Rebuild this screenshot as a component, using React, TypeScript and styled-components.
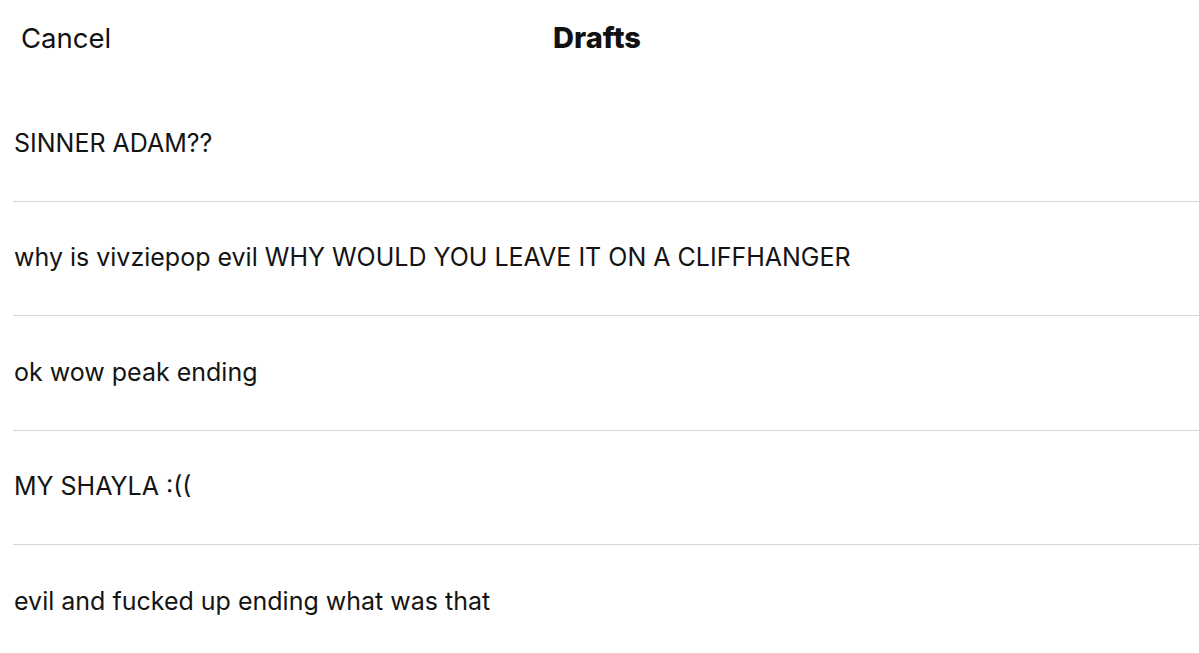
import React from "react";
import styled, { createGlobalStyle } from "styled-components";

const GlobalStyle = createGlobalStyle`
  html, body {
    margin: 0;
    padding: 0;
    background: #ffffff;
  }
  body {
    font-family: Inter, "Noto Sans", "Liberation Sans", sans-serif;
    color: #111111;
  }
`;

const Screen = styled.div`
  width: 1199px;
  height: 653px;
  overflow: hidden;
  background: #fff;
`;

const Header = styled.div`
  position: relative;
  height: 87px;
  display: flex;
  align-items: flex-start;
  justify-content: center;
  padding-top: 20px;
  box-sizing: border-box;
`;

const CancelButton = styled.button`
  position: absolute;
  left: 21px;
  top: 20px;
  border: 0;
  background: none;
  padding: 0;
  font-family: inherit;
  font-size: 27.5px;
  line-height: 36px;
  color: #111;
  cursor: pointer;
`;

const Title = styled.h1`
  margin: 0 0 0 -5px;
  font-size: 29px;
  line-height: 36px;
  font-weight: 800;
  color: #111;
`;

const List = styled.div`
  display: flex;
  flex-direction: column;
  padding-left: 13px;
`;

const Row = styled.div<{ $last?: boolean }>`
  height: 114.5px;
  display: flex;
  align-items: center;
  box-sizing: border-box;
  border-bottom: ${(p) => (p.$last ? "none" : "1.5px solid #d6d6d6")};
  padding-left: 1px;
  padding-bottom: 2px;
  font-size: 25px;
  color: #141414;
`;

const drafts = [
  "SINNER ADAM??",
  "why is vivziepop evil WHY WOULD YOU LEAVE IT ON A CLIFFHANGER",
  "ok wow peak ending",
  "MY SHAYLA :((",
  "evil and fucked up ending what was that",
];

const App: React.FC = () => {
  return (
    <>
      <GlobalStyle />
      <Screen>
        <Header>
          <CancelButton>Cancel</CancelButton>
          <Title>Drafts</Title>
        </Header>
        <List>
          {drafts.map((d, i) => (
            <Row key={i} $last={i === drafts.length - 1}>
              {d}
            </Row>
          ))}
        </List>
      </Screen>
    </>
  );
};

export default App;
